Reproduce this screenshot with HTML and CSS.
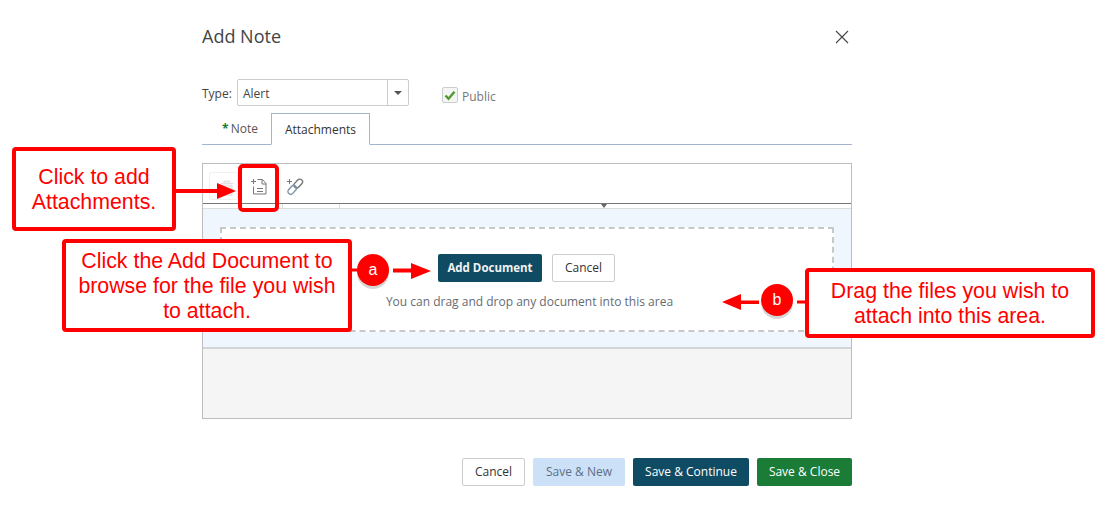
FILE: index.html
```html
<!DOCTYPE html>
<html lang="en">
<head>
<meta charset="utf-8">
<title>Add Note</title>
<link rel="stylesheet" href="styles.css">
</head>
<body>
<main class="dialog">
  <header class="dialog-head">
    <h1 class="title">Add Note</h1>
    <svg class="close" width="14" height="14" viewBox="0 0 14 14"><path d="M1 1l12 12M13 1L1 13" stroke="#444" stroke-width="1.1" fill="none"/></svg>
  </header>
  <div class="type-row">
    <span class="type-label">Type:</span>
    <div class="select"><span class="select-value">Alert</span><span class="select-btn"><i class="caret"></i></span></div>
    <span class="check"><svg width="12" height="11" viewBox="0 0 12 11"><path d="M1.5 5.5l3 3.2 6-7" stroke="#4f9a2c" stroke-width="2.4" fill="none"/></svg></span>
    <span class="public">Public</span>
  </div>
  <nav class="tabs">
    <span class="tab tab-note"><b class="star">*</b> Note</span>
    <span class="tab active">Attachments</span>
  </nav>
  <section class="panel">
    <div class="toolbar">
      <span class="tool tool-trash"><svg width="14" height="16" viewBox="0 0 14 16"><path d="M4 3V1h6v2M0.500 3.500h13M2 5h10v11H2z" stroke="#e2e2e2" fill="#ececec"/></svg></span>
      <span class="tool tool-doc"><svg width="18" height="18" viewBox="0 0 18 18"><path d="M1 3.500h5M3.500 1v5M7.500 1.500h5l3.500 4v10.500H3.500V8.500M12 1.500v4.500h4M7 10.500h6M7 13.500h6" stroke="#777" fill="none"/></svg></span>
      <span class="tool tool-link"><svg width="18" height="18" viewBox="0 0 18 18"><path d="M1 3.500h5M3.500 1v5" stroke="#777" fill="none"/><rect x="9.500" y="0.500" width="5.500" height="10" rx="2.700" transform="rotate(42 12.200 5.500)" stroke="#777" fill="none" stroke-width="1.400"/><rect x="3.500" y="6.800" width="5.500" height="10" rx="2.700" transform="rotate(42 6.200 11.800)" stroke="#7f93a8" fill="none" stroke-width="1.400"/></svg></span>
    </div>
    <div class="columns"><span class="col col-a"></span><span class="col col-b"></span><span class="col col-c"><i class="sort"></i></span></div>
    <div class="drop-wrap">
      <div class="drop">
        <div class="drop-actions">
          <span class="btn btn-dark btn-bold">Add Document</span>
          <span class="btn btn-white">Cancel</span>
        </div>
        <p class="drop-hint">You can drag and drop any document into this area</p>
      </div>
    </div>
  </section>
  <footer class="actions">
    <span class="btn btn-white">Cancel</span>
    <span class="btn btn-light">Save &amp; New</span>
    <span class="btn btn-dark">Save &amp; Continue</span>
    <span class="btn btn-green">Save &amp; Close</span>
  </footer>
</main>

<svg class="arrows" width="1107" height="506" viewBox="0 0 1107 506">
  <g fill="#f00" stroke="none">
    <path d="M176 189h41V183l19 8-19 8v-6h-41z"/>
    <path d="M352 268.500h7v3h-7zM393 268.500h18V263l20 8-20 8v-6.500h-18z"/>
    <path d="M722 302l19-8v6.500h18v3.500h-18v6zM797 300.500h9v3h-9z"/>
  </g>
</svg>
<div class="callout callout-attach">Click to add<br>Attachments.</div>
<div class="callout callout-add">Click the Add Document to<br>browse for the file you wish<br>to attach.</div>
<div class="callout callout-drag">Drag the files you wish to<br>attach into this area.</div>
<div class="highlight"></div>
<div class="step step-a">a</div>
<div class="step step-b">b</div>
</body>
</html>
```
FILE: styles.css
```css
* { box-sizing: border-box; }
html, body { margin: 0; height: 506px; overflow: hidden; background: #fff; }
body { font-family: "Open Sans", sans-serif; font-size: 12px; color: #444; position: relative; }

.dialog { width: 650px; margin-left: 202px; padding-top: 25px; }
.dialog-head { display: flex; justify-content: space-between; align-items: center; height: 22px; }
.title { margin: 0; font-size: 18px; font-weight: 400; line-height: 22px; color: #444; }
.close { margin-right: 3px; margin-top: 1px; }

.type-row { display: flex; align-items: center; margin-top: 32px; height: 27px; }
.type-label { width: 35px; font-size: 12px; position: relative; top: 1px; }
.select { width: 172px; height: 27px; display: flex; border: 1px solid #ccc; border-radius: 2px; }
.select-value { flex: 1; padding-left: 5px; line-height: 27px; font-size: 12px; }
.select-btn { width: 21px; border-left: 1px solid #ccc; display: flex; align-items: center; justify-content: center; }
.caret { border: 4px solid transparent; border-top: 4px solid #555; border-bottom: 0; width: 0; height: 0; }
.check { width: 16px; height: 16px; margin-left: 33px; margin-top: 5px; border: 1px solid #ccc; border-radius: 2px; background: #f5f5f5; display: flex; align-items: center; justify-content: center; }
.public { margin-left: 4px; margin-top: 7px; font-size: 12px; color: #777; }

.tabs { display: flex; height: 32px; margin-top: 7px; border-bottom: 1px solid #a3b5cc; padding-left: 20px; }
.tab { height: 32px; padding-top: 8px; font-size: 12px; line-height: 16px; color: #555; }
.tab-note { width: 49px; }
.tab.active { width: 99px; text-align: center; border: 1px solid #a3b5cc; border-bottom: 1px solid #fff; color: #333; background: #fff; }
.star { color: #1a7c36; font-weight: 700; margin-right: -1px; }

.panel { margin-top: 18px; height: 256px; border: 1px solid #bdbdbd; background: #f5f5f5; }
.toolbar { height: 40px; display: flex; align-items: flex-start; background: #fff; border-bottom: 1px solid #777; padding: 8px 0 0 6px; }
.tool { display: block; }
.tool-trash { width: 29px; height: 28px; border: 1px solid #f0f0f0; border-radius: 2px; padding: 7px 0 0 10px; }
.tool-doc { width: 36px; margin: 6px 0 0 12px; }
.tool-link { width: 18px; margin-top: 6px; }
.columns { height: 5px; display: flex; background: #fff; border-bottom: 1px solid #ddd; }
.col { display: block; height: 4px; border-right: 1px solid #ddd; }
.col-a { width: 80px; }
.col-b { width: 57px; }
.col-c { flex: 1; border-right: 0; position: relative; }
.sort { position: absolute; left: 261px; top: 0; border: 3px solid transparent; border-top: 4px solid #666; border-bottom: 0; width: 0; height: 0; }

.drop-wrap { height: 140px; background: #eff6fd; padding: 18px 17px 17px; border-bottom: 2px solid #d2d4d6; }
.drop { height: 105px; background: #fff; border: 2px dashed #c8c8c8; padding-top: 25px; text-align: center; }
.drop-actions { display: flex; justify-content: center; gap: 10px; padding-right: 1px; }
.drop-hint { margin: 11px 0 0; padding-left: 5px; font-size: 12px; line-height: 17px; color: #666c73; }

.btn { display: flex; align-items: center; justify-content: center; height: 28px; padding-bottom: 2px; border-radius: 2px; font-size: 12px; }
.btn-dark { background: #0f4c64; color: #fff; }
.btn-bold { width: 104px; padding-bottom: 1px; font-weight: 700; font-size: 11.500px; color: #f2f2f2; }
.btn-white { width: 63px; background: #fff; border: 1px solid #ccc; color: #333; }
.btn-light { width: 92px; background: #cce0f7; color: #5c7085; }
.btn-green { width: 95px; background: #1a7c36; color: #fff; }

.actions { display: flex; justify-content: flex-end; gap: 8px; margin-top: 39px; }
.actions .btn-dark { width: 116px; }

.arrows { position: absolute; left: 0; top: 0; pointer-events: none; }
.callout { position: absolute; display: flex; align-items: center; justify-content: center; text-align: center; padding-top: 2px; background: #fff; border: 4px solid #f00; border-radius: 4px; color: #f00; font-family: "Liberation Sans", Arial, sans-serif; font-size: 21.330px; line-height: 24.700px; }
.callout-attach { left: 12px; top: 147px; width: 164px; height: 84px; }
.callout-add { left: 62px; top: 239px; width: 290px; height: 93px; }
.callout-drag { left: 805px; top: 268px; width: 290px; height: 70px; }
.highlight { position: absolute; left: 238px; top: 164px; width: 41px; height: 48px; border: 4px solid #f00; border-radius: 5px; }
.step { position: absolute; width: 32px; height: 32px; border-radius: 50%; background: #f00; color: #fff; display: flex; align-items: center; justify-content: center; font-family: "Liberation Sans", Arial, sans-serif; font-size: 16px; box-shadow: 0 3px 0 0 #d6d6d6; }
.step-a { left: 357px; top: 254px; }
.step-b { left: 761px; top: 284px; }
```
